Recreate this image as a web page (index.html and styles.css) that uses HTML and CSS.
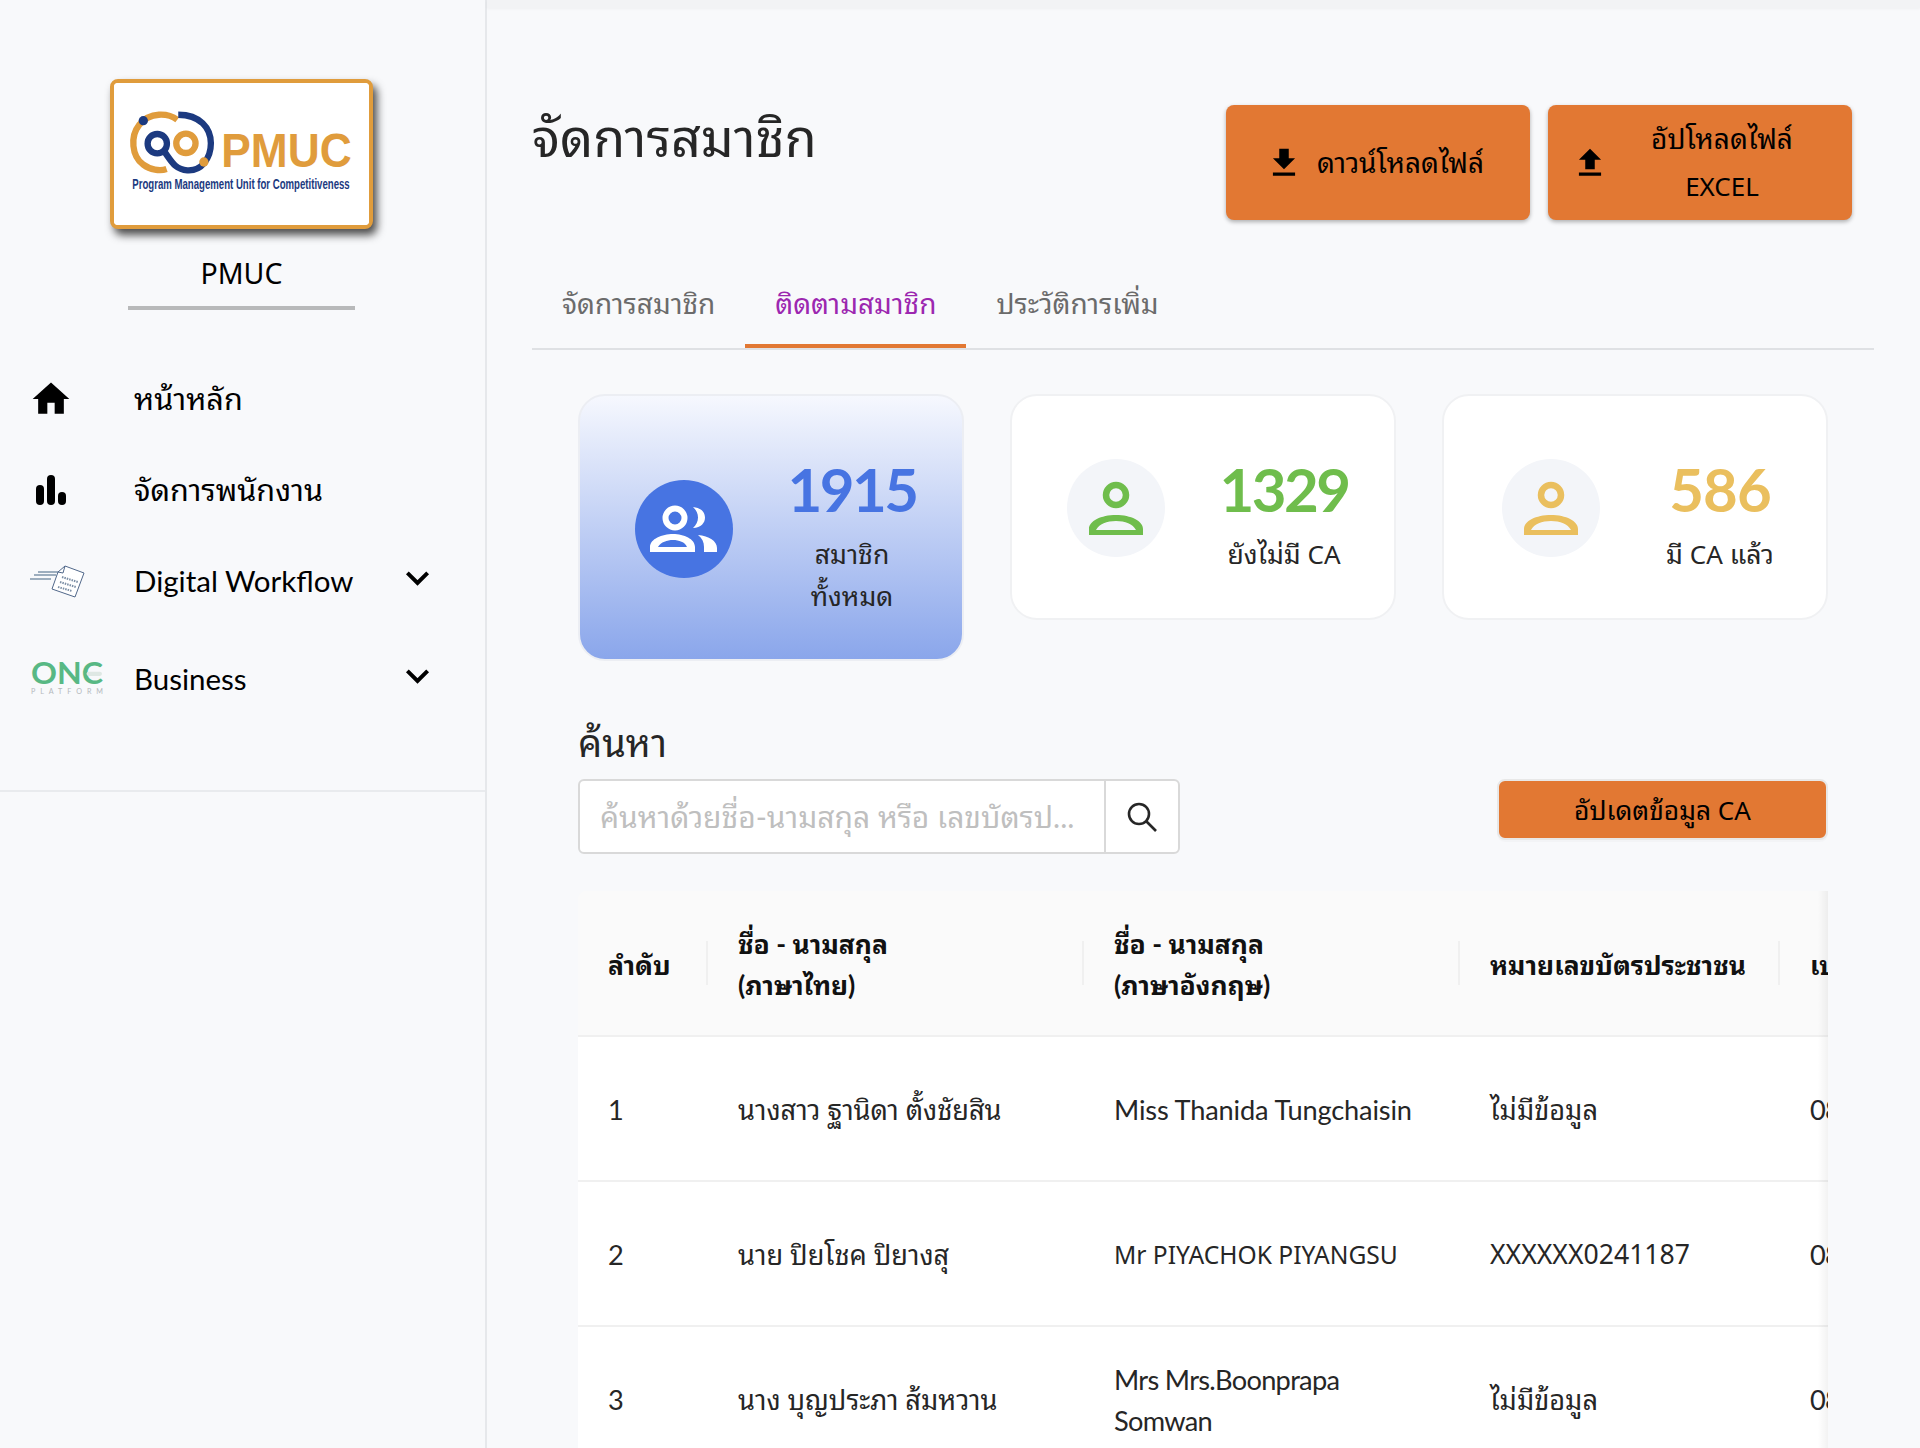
FILE: index.html
```html
<!DOCTYPE html>
<html lang="th">
<head>
<meta charset="utf-8">
<title>จัดการสมาชิก</title>
<link rel="stylesheet" href="styles.css">
</head>
<body>
<div class="app">
  <aside class="sidebar">
    <div class="brand">
      <div class="logo">
        <svg class="logo-art" viewBox="42 40 766 426">
          <rect x="42" y="40" width="766" height="426" fill="#fff"/>
          <g fill="none" stroke-width="19">
            <path d="M232 150 C 205 130 150 125 118 165 C 90 200 95 260 130 285 C 150 300 180 305 200 298" stroke="#e09c3c"/>
            <circle cx="258" cy="221" r="29" stroke="#e09c3c"/>
            <circle cx="172" cy="222" r="29" stroke="#1c3a80"/>
            <path d="M192 244 C 215 275 225 300 262 302 C 305 305 333 265 333 221 C 333 175 300 135 235 135" stroke="#1c3a80"/>
          </g>
          <circle cx="130" cy="153" r="14" fill="#1c3a80"/>
          <circle cx="312" cy="277" r="14" fill="#e09c3c"/>
          <text class="logo-name" x="364" y="292" textLength="392" lengthAdjust="spacingAndGlyphs">PMUC</text>
          <text class="logo-sub" x="97" y="358" textLength="653" lengthAdjust="spacingAndGlyphs">Program Management Unit for Competitiveness</text>
        </svg>
      </div>
      <div class="brand-name">PMUC</div>
      <div class="brand-rule"></div>
    </div>
    <nav class="nav">
      <a class="nav-item">
        <span class="nav-icon"><svg class="i-home" viewBox="0 0 24 24"><path d="M10 20v-6h4v6h5v-8h3L12 3 2 12h3v8z"/></svg></span>
        <span class="nav-label">หน้าหลัก</span>
      </a>
      <a class="nav-item">
        <span class="nav-icon"><svg class="i-bars" viewBox="0 0 32 32"><rect x="1" y="11" width="8" height="20" rx="4"/><rect x="12" y="1" width="8" height="30" rx="4"/><rect x="23" y="18" width="8" height="13" rx="4"/></svg></span>
        <span class="nav-label">จัดการพนักงาน</span>
      </a>
      <a class="nav-item nav-item-flow">
        <span class="nav-icon"><svg class="i-doc" viewBox="0 0 56 34">
          <path d="M9 8h22M1 15h21M5 11h22" stroke="#7f95ab" stroke-width="1.3" fill="none"/>
          <path d="M36 2 L55 9 L46 33 L23 25 L29 8 Z" fill="#fff" stroke="#51688a" stroke-width="1"/>
          <path d="M36 2 L34 9 L29 8" fill="none" stroke="#51688a" stroke-width="1"/>
          <path d="M33 13l16 5M31 18l16 5M29 23l14 4" stroke="#7b8ea5" stroke-width="2" stroke-dasharray="1.5 1"/>
        </svg></span>
        <span class="nav-label nav-label-latin">Digital Workflow</span>
        <svg class="chev" viewBox="0 0 24 24"><path d="M3 7l9 9 9-9" /></svg>
      </a>
      <a class="nav-item nav-item-one">
        <span class="nav-icon"><svg class="i-one" viewBox="0 0 70 30">
          <text class="one-word" x="0" y="20" textLength="70" lengthAdjust="spacingAndGlyphs">ONC</text>
          <rect x="54" y="8.5" width="15" height="4" rx="2" fill="#dfe8e4"/>
          <text class="one-sub" x="0" y="30" textLength="70">PLATFORM</text>
        </svg></span>
        <span class="nav-label nav-label-latin">Business</span>
        <svg class="chev" viewBox="0 0 24 24"><path d="M3 7l9 9 9-9" /></svg>
      </a>
    </nav>
    <div class="side-rule"></div>
  </aside>

  <main class="main">
    <div class="topbar"></div>
    <div class="content">
      <header class="head">
        <h1 class="title">จัดการสมาชิก</h1>
        <div class="head-actions">
          <button class="btn-big">
            <svg class="btn-icon" viewBox="0 0 24 24"><path d="M19 9h-4V3H9v6H5l7 7 7-7zM5 18v2h14v-2H5z"/></svg>
            <span class="btn-text">ดาวน์โหลดไฟล์</span>
          </button>
          <button class="btn-big btn-upload">
            <svg class="btn-icon" viewBox="0 0 24 24"><path d="M9 16h6v-6h4l-7-7-7 7h4zm-4 2h14v2H5z"/></svg>
            <span class="btn-text btn-text-wide">อัปโหลดไฟล์ <span class="latin">EXCEL</span></span>
          </button>
        </div>
      </header>

      <div class="tabs">
        <div class="tab">จัดการสมาชิก</div>
        <div class="tab tab-active">ติดตามสมาชิก</div>
        <div class="tab">ประวัติการเพิ่ม</div>
      </div>

      <section class="cards">
        <div class="card card-blue">
          <div class="disc disc-blue">
            <svg viewBox="0 0 98 98" class="disc-art">
              <circle cx="40" cy="38" r="9.5" fill="none" stroke="#fff" stroke-width="6"/>
              <path fill="#fff" fill-rule="evenodd" d="M15 72v-5C15 59 27 54 38 54s22 5 22 13v5ZM23 67h29C50 62 44 60 38 60s-12 2-15 7Z"/>
              <path fill="#fff" d="M58 27c8 1 12 5 12 10.500s-4 10-12 10.500c3-3 5-6 5-10.500s-2-7.500-5-10.500ZM63 55c11 1 19 6 19 13v4H69v-5c0-5-2-9-6-12Z"/>
            </svg>
          </div>
          <div class="stat">
            <div class="stat-num num-blue">1915</div>
            <div class="stat-label stat-label-narrow">สมาชิกทั้งหมด</div>
          </div>
        </div>
        <div class="card card-white">
          <div class="disc">
            <svg viewBox="0 0 98 98" class="disc-art">
              <circle cx="49" cy="36" r="10" fill="none" stroke="#6fbd4c" stroke-width="6.500"/>
              <path fill="#6fbd4c" fill-rule="evenodd" d="M22 76v-6C22 62 34 56 49 56s27 6 27 14v6ZM29 71h40C66 65 58 62 49 62s-17 3-20 9Z"/>
            </svg>
          </div>
          <div class="stat">
            <div class="stat-num num-green">1329</div>
            <div class="stat-label">ยังไม่มี <span class="latin">CA</span></div>
          </div>
        </div>
        <div class="card card-white card-last">
          <div class="disc">
            <svg viewBox="0 0 98 98" class="disc-art">
              <circle cx="49" cy="36" r="10" fill="none" stroke="#eabf5e" stroke-width="6.500"/>
              <path fill="#eabf5e" fill-rule="evenodd" d="M22 76v-6C22 62 34 56 49 56s27 6 27 14v6ZM29 71h40C66 65 58 62 49 62s-17 3-20 9Z"/>
            </svg>
          </div>
          <div class="stat">
            <div class="stat-num num-gold">586</div>
            <div class="stat-label">มี <span class="latin">CA</span> แล้ว</div>
          </div>
        </div>
      </section>

      <section class="search-block">
        <div class="search-label">ค้นหา</div>
        <div class="search-row">
          <div class="search-box">
            <div class="search-input">ค้นหาด้วยชื่อ-นามสกุล หรือ เลขบัตรป...</div>
            <div class="search-btn">
              <svg viewBox="0 0 32 32" class="search-icon"><circle cx="13" cy="13" r="10" /><path d="M20.500 20.500 L30 30" /></svg>
            </div>
          </div>
          <button class="btn-update">อัปเดตข้อมูล <span class="latin">CA</span></button>
        </div>
      </section>

      <section class="table-wrap">
        <table class="table">
          <colgroup>
            <col class="c1"><col class="c2"><col class="c3"><col class="c4"><col class="c5">
          </colgroup>
          <thead>
            <tr>
              <th>ลำดับ</th>
              <th>ชื่อ - นามสกุล<br>(ภาษาไทย)</th>
              <th>ชื่อ - นามสกุล<br>(ภาษาอังกฤษ)</th>
              <th>หมายเลขบัตรประชาชน</th>
              <th>เบอร์โทรศัพท์</th>
            </tr>
          </thead>
          <tbody>
            <tr>
              <td>1</td><td>นางสาว ฐานิดา ตั้งชัยสิน</td><td class="tr-s">Miss Thanida Tungchaisin</td><td>ไม่มีข้อมูล</td><td class="tr-m">0812345678</td>
            </tr>
            <tr>
              <td>2</td><td>นาย ปิยโชค ปิยางสุ</td><td class="cell-caps">Mr PIYACHOK PIYANGSU</td><td class="cell-id">XXXXXX0241187</td><td class="tr-m">0812345678</td>
            </tr>
            <tr>
              <td>3</td><td>นาง บุญประภา ส้มหวาน</td><td class="tr-m">Mrs Mrs.Boonprapa Somwan</td><td>ไม่มีข้อมูล</td><td class="tr-m">0812345678</td>
            </tr>
          </tbody>
        </table>
        <div class="table-shadow"></div>
      </section>
    </div>
  </main>
</div>
</body>
</html>
```

FILE: styles.css
```css
* { box-sizing: border-box; }
html, body { margin: 0; height: 100%; }
body {
  background: #f8f9fb;
  color: #000;
  font-family: Lato, "Noto Sans Thai Looped", "Noto Looped Thai", Loma, Garuda, Waree, Norasi, Sarabun, "Noto Sans", "Noto Sans CJK SC", sans-serif;
  overflow: hidden;
}
.app { display: flex; height: 1448px; overflow: hidden; }
.latin { font-family: "Noto Sans", sans-serif; font-size: 26px; }

/* Sidebar */
.sidebar {
  width: 487px;
  flex: none;
  border-right: 2px solid #e6e8eb;
}
.brand { display: flex; flex-direction: column; align-items: center; padding: 79px 2px 0 0; }
.logo {
  width: 263px;
  height: 150px;
  border: 4px solid #e09c3c;
  border-radius: 8px;
  background: #fff;
  box-shadow: 4px 6px 8px #4c4c4c;
  overflow: hidden;
}
.logo-art { display: block; width: 100%; height: 100%; }
.logo-name { font: 700 142px "Liberation Sans", sans-serif; fill: #e09c3c; }
.logo-sub { font: 700 44px "Liberation Sans", sans-serif; fill: #1c3a80; }
.brand-name { font-family: "Noto Sans", sans-serif; font-size: 28.500px; line-height: 40px; margin-top: 24px; }
.brand-rule { width: 227px; height: 4px; background: #b8b9ba; margin-top: 13px; }

.nav { display: flex; flex-direction: column; margin-top: 43px; }
.nav-item { display: flex; align-items: center; height: 91px; padding-left: 28px; }
.nav-item-one { margin-top: 7px; }
.nav-icon { width: 106px; flex: none; display: flex; align-items: center; }
.nav-label { font-size: 30.600px; line-height: 40px; flex: 1; }
.nav-label-latin { font-size: 29.500px; }
.i-home { width: 44px; height: 44px; margin-left: 1px; fill: #000; }
.i-bars { width: 32px; height: 32px; margin-left: 7px; fill: #000; }
.i-doc { width: 56px; height: 34px; margin-left: 1px; }
.i-one { width: 72px; height: 31px; margin-left: 3px; overflow: visible; }
.one-word { font: 700 29px Lato, sans-serif; fill: #58b884; }
.one-sub { font: 400 7px Lato, sans-serif; fill: #b4b8bb; }
.chev { width: 27px; height: 27px; margin-right: 54px; margin-top: -4px; fill: none; stroke: #000; stroke-width: 3.500; }
.side-rule { height: 2px; background: #e9ebee; margin-top: 66px; }

/* Main */
.main { flex: 1; min-width: 0; }
.topbar { height: 8px; background: #f2f3f5; box-shadow: 0 1px 3px rgba(0,0,0,.04); }
.content { padding: 0 46px 0 45px; }
.head { display: flex; justify-content: space-between; padding-top: 97px; }
.title { font-size: 52px; font-weight: 400; line-height: 56px; margin: 4px 0 0; color: #262626; }
.head-actions { display: flex; gap: 18px; margin-right: 22px; }
.btn-big {
  width: 304px;
  height: 115px;
  background: #e27833;
  border: 0;
  border-radius: 8px;
  box-shadow: 0 2px 4px rgba(0,0,0,.3);
  display: flex;
  align-items: center;
  justify-content: center;
  padding: 0 20px;
  gap: 14px;
  font: inherit;
  color: #000;
}
.btn-upload { justify-content: flex-start; padding-left: 23px; }
.btn-icon { width: 38px; height: 38px; flex: none; fill: #000; margin-left: -7px; }
.btn-upload .btn-icon { margin-left: 0; }
.btn-text { font-size: 28px; line-height: 47px; }
.btn-text-wide { width: 180px; margin-left: 9px; text-align: center; }

.tabs { display: flex; height: 122px; margin-top: 8px; border-bottom: 2px solid #dfe1e4; padding-top: 49px; }
.tab { font-size: 28px; line-height: 52px; padding: 0 30px; color: #6b6b6b; height: 71px; border-bottom: 4px solid transparent; }
.tab-active { color: #9c27b0; border-bottom-color: #e27833; }

.cards { display: flex; align-items: flex-start; gap: 46px; padding: 44px 46px 0; }
.card {
  flex: none;
  width: 386px;
  height: 226px;
  background: #fff;
  border: 2px solid #f0f1f3;
  border-radius: 27px;
  display: flex;
  align-items: center;
  padding-left: 55px;
}
.card-last { padding-left: 58px; }
.card-blue {
  height: 267px;
  border-color: #eceef3;
  background: linear-gradient(#f6f8fe, #8aa6eb);
}
.disc { width: 98px; height: 98px; border-radius: 50%; background: #f3f5f9; flex: none; margin-top: 2px; }
.disc-blue { background: #4774e2; }
.disc-art { display: block; width: 98px; height: 98px; }
.stat { width: 200px; margin-left: 19px; text-align: center; padding-top: 15px; }
.card-last .stat { margin-left: 20px; }
.stat-num { font: 700 60px/72px Lato, "Noto Sans", sans-serif; letter-spacing: -2.500px; margin-top: -1px; }
.num-blue { color: #4774e2; }
.num-green { color: #6fbd4c; }
.num-gold { color: #eabf5e; letter-spacing: -1px; }
.stat-label { font-size: 26.600px; line-height: 42px; color: #262626; margin-top: 8px; }
.stat-label-narrow { width: 100px; margin: 8px auto 0; }

.search-block { padding: 0 46px; margin-top: -12px; }
.search-label { font-size: 38px; line-height: 54px; color: #262626; margin-top: 66px; }
.search-row { display: flex; justify-content: space-between; align-items: flex-start; margin-top: 10px; }
.search-box {
  width: 602px;
  height: 75px;
  display: flex;
  background: #fff;
  border: 2px solid #d9d9d9;
  border-radius: 6px;
}
.search-input {
  flex: none;
  width: 524px;
  padding: 0 20px;
  font-size: 30px;
  line-height: 71px;
  color: #bfbfbf;
  white-space: nowrap;
  overflow: hidden;
}
.search-btn {
  flex: 1;
  border-left: 2px solid #d9d9d9;
  display: flex;
  align-items: center;
  justify-content: center;
}
.search-icon { width: 32px; height: 32px; fill: none; stroke: #262626; stroke-width: 2.600; }
.btn-update {
  width: 331px;
  height: 61px;
  background: #e27833;
  border: 2px solid #e8e8e8;
  border-radius: 8px;
  font: inherit;
  font-size: 26.400px;
  line-height: 40px;
  color: #000;
  box-shadow: 0 2px 0 rgba(0,0,0,.02);
}

.table-wrap { position: relative; margin: 37px 46px 0; overflow: hidden; border-radius: 8px 0 0 0; }
.table { width: 1700px; table-layout: fixed; border-collapse: collapse; }
.c1 { width: 130px; }
.c2 { width: 376px; }
.c3 { width: 376px; }
.c4 { width: 320px; }
.c5 { width: 498px; }
th {
  background: #fafafa;
  height: 145px;
  padding: 4px 30px 0;
  font-size: 26.400px;
  line-height: 41px;
  font-weight: 700;
  text-align: left;
  color: #111;
  border-bottom: 2px solid #f0f0f0;
  position: relative;
  white-space: nowrap;
}
th:not(:last-child)::after {
  content: "";
  position: absolute;
  right: 0;
  top: 50%;
  height: 44px;
  margin-top: -22px;
  width: 2px;
  background: #f0f0f0;
}
td {
  background: #fff;
  height: 145px;
  padding: 2px 30px 0;
  font-size: 27.200px;
  line-height: 41px;
  color: #262626;
  border-bottom: 2px solid #f0f0f0;
}
.tr-s { letter-spacing: -.15px; }
.tr-m { letter-spacing: -.7px; }
.cell-caps { font-family: "Noto Sans", sans-serif; font-size: 24.600px; }
.cell-id { font-family: "Noto Sans", sans-serif; font-size: 26.600px; }
.table-shadow {
  position: absolute;
  top: 0;
  right: 0;
  bottom: 0;
  width: 10px;
  background: linear-gradient(to left, rgba(0,0,0,.05), transparent);
}
```
